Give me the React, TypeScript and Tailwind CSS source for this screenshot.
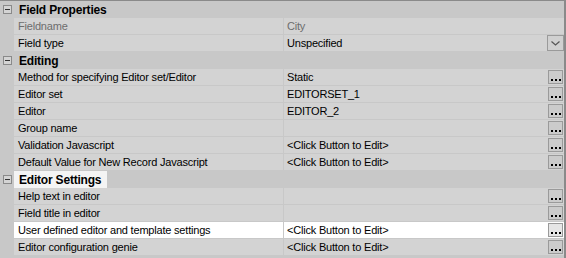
import React from "react";

type Row =
  | { kind: "cat"; label: string; highlight?: boolean }
  | {
      kind: "prop";
      label: string;
      value?: string;
      muted?: boolean;
      button?: "dots" | "drop";
      selected?: boolean;
    };

const rows: Row[] = [
  { kind: "cat", label: "Field Properties" },
  { kind: "prop", label: "Fieldname", value: "City", muted: true },
  { kind: "prop", label: "Field type", value: "Unspecified", button: "drop" },
  { kind: "cat", label: "Editing" },
  { kind: "prop", label: "Method for specifying Editor set/Editor", value: "Static", button: "dots" },
  { kind: "prop", label: "Editor set", value: "EDITORSET_1", button: "dots" },
  { kind: "prop", label: "Editor", value: "EDITOR_2", button: "dots" },
  { kind: "prop", label: "Group name", button: "dots" },
  { kind: "prop", label: "Validation Javascript", value: "<Click Button to Edit>", button: "dots" },
  { kind: "prop", label: "Default Value for New Record Javascript", value: "<Click Button to Edit>", button: "dots" },
  { kind: "cat", label: "Editor Settings", highlight: true },
  { kind: "prop", label: "Help text in editor", button: "dots" },
  { kind: "prop", label: "Field title in editor", button: "dots" },
  { kind: "prop", label: "User defined editor and template settings", value: "<Click Button to Edit>", button: "dots", selected: true },
  { kind: "prop", label: "Editor configuration genie", value: "<Click Button to Edit>", button: "dots" },
];

const DotsButton = ({ light }: { light?: boolean }) => (
  <div
    className={`mr-[1px] flex h-[14px] w-[15px] shrink-0 items-end justify-center gap-[2px] border border-[#9a9a9a] pb-[2px] ${
      light ? "bg-[#e6e6e6]" : "bg-[#cbcbcb]"
    }`}
  >
    <span className="h-[2px] w-[2px] bg-black" />
    <span className="h-[2px] w-[2px] bg-black" />
    <span className="h-[2px] w-[2px] bg-black" />
  </div>
);

const DropButton = () => (
  <div className="flex h-[16px] w-[17px] shrink-0 items-center justify-center border border-[#9a9a9a] bg-[#d0d0d0]">
    <svg width="9" height="5" viewBox="0 0 9 5">
      <path d="M0.5 0.5 L4.5 4 L8.5 0.5" fill="none" stroke="#555" strokeWidth="1.2" />
    </svg>
  </div>
);

const Collapse = () => (
  <div className="ml-[3px] flex h-[9px] w-[9px] items-center justify-center border border-[#8a8a8a] bg-[#d4d4d4]">
    <span className="h-[1px] w-[5px] bg-[#333]" />
  </div>
);

export default function App() {
  return (
    <div className="h-[258px] w-[566px] overflow-hidden border-t border-r-2 border-[#8a8a8a] bg-[#c8c8c8] font-['Liberation_Sans',Arial,sans-serif] text-[11px] tracking-[-0.2px] text-black">
      {rows.map((r, i) =>
        r.kind === "cat" ? (
          <div key={i} className="flex h-[17px] items-center">
            <div className="w-[14px]">
              <Collapse />
            </div>
            <div
              className={`flex h-full items-center pl-[5px] pr-[6px] text-[12px] font-bold tracking-[-0.2px] ${
                r.highlight ? "bg-[#f4f4f4]" : ""
              }`}
            >
              {r.label}
            </div>
          </div>
        ) : (
          <div key={i} className="flex h-[17px] pl-[14px]">
            <div
              className={`flex w-[270px] items-center border-r border-b border-[#c8c8c8] pl-[4px] ${
                r.selected ? "bg-white" : "bg-[#d3d3d3]"
              } ${r.muted ? "text-[#6d6d6d]" : ""}`}
            >
              <span className="whitespace-nowrap">{r.label}</span>
            </div>
            <div
              className={`flex flex-1 items-center border-b border-[#c8c8c8] pl-[3px] ${
                r.selected ? "bg-white" : "bg-[#d3d3d3]"
              } ${r.muted ? "text-[#6d6d6d]" : ""}`}
            >
              <span className="flex-1 whitespace-nowrap">{r.value}</span>
              {r.button === "dots" && <DotsButton light={r.selected} />}
              {r.button === "drop" && <DropButton />}
            </div>
          </div>
        )
      )}
    </div>
  );
}
